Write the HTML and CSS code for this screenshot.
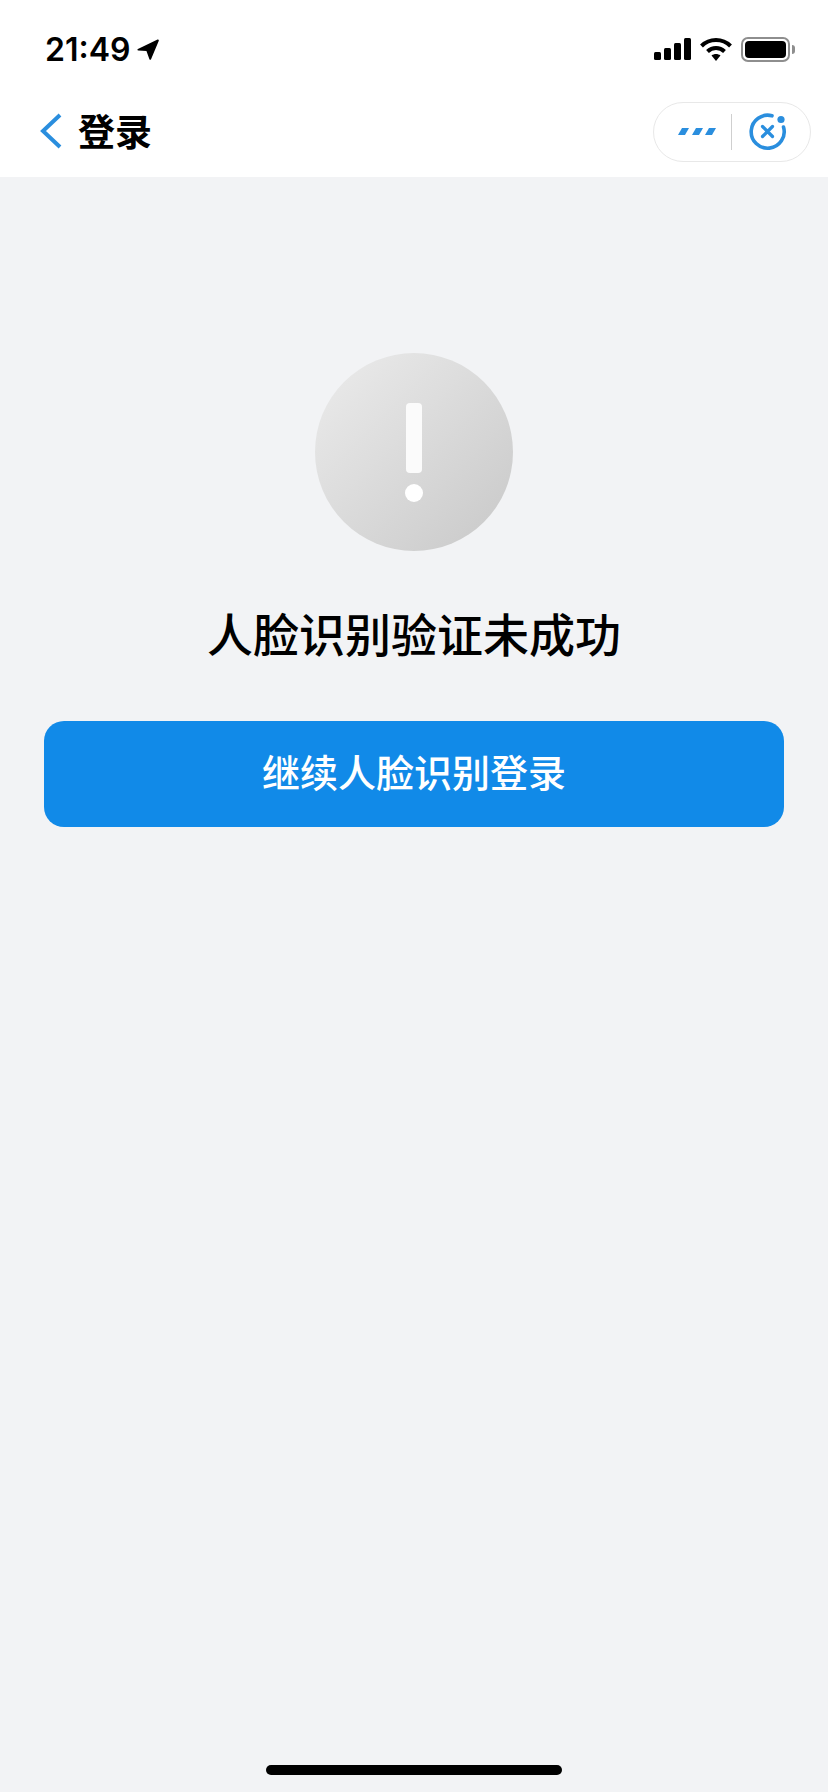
FILE: index.html
```html
<!DOCTYPE html>
<html lang="zh-CN">
<head>
<meta charset="utf-8">
<title>登录</title>
<link rel="stylesheet" href="styles.css">
</head>
<body>
<div class="screen">
  <header class="top">
    <div class="status">
      <div class="status-left">
        <span class="time">21:49</span>
        <svg class="loc" width="23" height="23" viewBox="0 0 24 24"><path d="M22.500 1.500 2 11.500c-.9.5-.6 1.600.3 1.600l8.600.4 3.100 8.700c.4.800 1.400.700 1.700-.1L23.800 2.900c.2-.9-.6-1.700-1.300-1.400Z" fill="#000"/></svg>
      </div>
      <div class="status-right">
        <svg class="signal" width="38" height="24" viewBox="0 0 38 24"><g fill="#000"><rect x="0" y="15" width="7" height="8" rx="1.500"/><rect x="10" y="11" width="7" height="12" rx="1.500"/><rect x="20" y="6" width="7" height="17" rx="1.500"/><rect x="30" y="1" width="7" height="22" rx="1.500"/></g></svg>
        <svg class="wifi" width="32" height="24" viewBox="0 0 32 24"><g fill="none" stroke="#000" stroke-width="4"><path d="M1.500 9C9.500 1 22.500 1 30.500 9"/><path d="M7.500 14.500c4.800-4.600 12.200-4.600 17 0"/></g><path d="M11.500 18.500c2.700-2 6.300-2 9 0L16 24Z" fill="#000"/></svg>
        <div class="battery"><div class="battery-fill"></div></div>
        <div class="battery-cap"></div>
      </div>
    </div>
    <nav class="nav">
      <div class="nav-left">
        <svg width="24" height="36" viewBox="0 0 24 36"><path d="M22 2 5 18l17 16" fill="none" stroke="#2a8ede" stroke-width="4"/></svg>
        <span class="nav-title">登录</span>
      </div>
      <div class="capsule">
        <div class="cap-side cap-more">
          <svg width="38" height="8" viewBox="0 0 38 8"><g fill="#2a8ede"><path d="M4 0h7l-4 7H0Z"/><path d="M18 0h7l-4 7h-7Z"/><path d="M31 0h7l-4 7h-7Z"/></g></svg>
        </div>
        <div class="cap-divider"></div>
        <div class="cap-side cap-close">
          <svg width="40" height="40" viewBox="0 0 40 40"><path d="M24 3.800A16.500 16.500 0 1 0 35.500 15" fill="none" stroke="#2a8ede" stroke-width="3.600" stroke-linecap="round"/><circle cx="33" cy="7.500" r="3.600" fill="#2a8ede"/><path d="m14.500 14.500 10 10m0-10-10 10" fill="none" stroke="#2a8ede" stroke-width="3.200" stroke-linecap="round"/></svg>
        </div>
      </div>
    </nav>
  </header>
  <main class="main">
    <div class="alert-circle">
      <div class="alert-bar"></div>
      <div class="alert-dot"></div>
    </div>
    <h1 class="title">人脸识别验证未成功</h1>
    <button class="primary">继续人脸识别登录</button>
  </main>
  <div class="home-bar"></div>
</div>
</body>
</html>
```

FILE: styles.css
```css
* { box-sizing: border-box; }
html, body { margin: 0; padding: 0; }
body {
  width: 828px;
  height: 1792px;
  overflow: hidden;
  font-family: "Liberation Sans", "Noto Sans CJK SC", sans-serif;
  background: #f2f3f5;
}
.screen {
  position: relative;
  width: 828px;
  height: 1792px;
  display: flex;
  flex-direction: column;
}
.top { background: #fff; height: 177px; flex: none; }
.status {
  height: 88px;
  padding: 10px 33px 0 45px;
  display: flex;
  justify-content: space-between;
  align-items: center;
}
.status-left { display: flex; align-items: center; gap: 6px; }
.time {
  font-family: Inter, "Liberation Sans", sans-serif;
  font-size: 32px;
  font-weight: 600;
  color: #000;
}
.status-right { display: flex; align-items: center; }
.signal { margin-right: 8px; }
.wifi { margin-right: 9px; }
.battery {
  width: 49px;
  height: 25px;
  border: 2px solid #8e8e8e;
  border-radius: 7px;
  padding: 2px;
}
.battery-fill { width: 100%; height: 100%; background: #000; border-radius: 4px; }
.battery-cap {
  width: 3px;
  height: 9px;
  margin-left: 2px;
  background: #8e8e8e;
  border-radius: 0 3px 3px 0;
}
.nav {
  height: 89px;
  padding: 0 17px 4px 38px;
  display: flex;
  justify-content: space-between;
  align-items: center;
}
.nav-left { display: flex; align-items: center; gap: 16px; }
.nav-title {
  font-family: "Noto Sans CJK SC", sans-serif;
  font-size: 37px;
  font-weight: 700;
  line-height: 1;
  color: #000;
}
.capsule {
  width: 158px;
  height: 60px;
  margin-bottom: -2px;
  border: 1px solid #e8e8e8;
  border-radius: 30px;
  background: #fff;
  display: flex;
  align-items: center;
}
.cap-side { display: flex; justify-content: center; align-items: center; }
.cap-more { width: 77px; padding-left: 8px; }
.cap-close { flex: 1; padding-right: 6px; }
.cap-divider { width: 1px; height: 36px; background: #cfcfcf; flex: none; }
.main {
  flex: 1;
  padding: 176px 44px 0;
  display: flex;
  flex-direction: column;
  align-items: center;
}
.alert-circle {
  width: 198px;
  height: 198px;
  border-radius: 50%;
  background: linear-gradient(135deg, #ececec, #c8c8c8);
  padding-top: 50px;
  display: flex;
  flex-direction: column;
  align-items: center;
}
.alert-bar { width: 16px; height: 70px; border-radius: 4px; background: #fbfbfb; }
.alert-dot { width: 18px; height: 18px; margin-top: 11px; border-radius: 50%; background: #fff; }
.title {
  margin: 50px 0 0;
  font-family: "Noto Sans CJK SC", sans-serif;
  font-size: 46px;
  font-weight: 500;
  line-height: 62px;
  color: #000;
  white-space: nowrap;
}
.primary {
  margin-top: 58px;
  width: 740px;
  height: 106px;
  padding: 0 0 8px;
  border: 0;
  border-radius: 20px;
  background: #118ae8;
  color: #fff;
  font-family: "Noto Sans CJK SC", sans-serif;
  font-size: 38px;
  font-weight: 500;
}
.home-bar {
  position: absolute;
  left: 266px;
  bottom: 17px;
  width: 296px;
  height: 10px;
  border-radius: 5px;
  background: #000;
}
```
